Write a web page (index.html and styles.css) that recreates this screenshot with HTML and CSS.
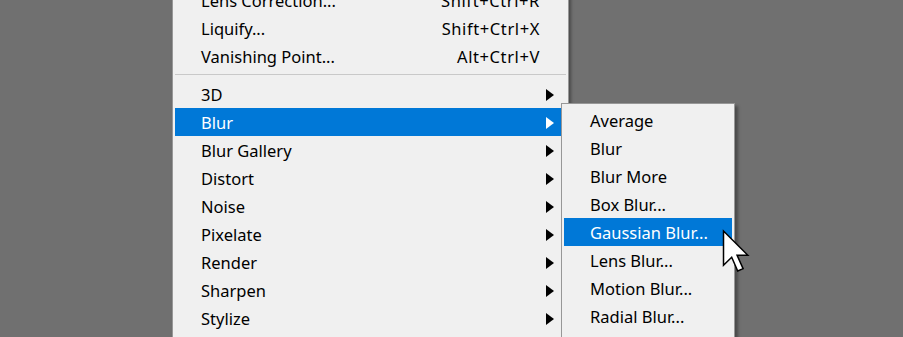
FILE: index.html
```html
<!DOCTYPE html>
<html lang="en">
<head>
  <meta charset="UTF-8">
  <title>Filter menu — Blur</title>
  <link rel="stylesheet" href="styles.css">
</head>
<body>
  <div class="menu">
    <div class="item"><span class="label">Lens Correction...</span><span class="key">Shift+Ctrl+R</span></div>
    <div class="item"><span class="label">Liquify...</span><span class="key">Shift+Ctrl+X</span></div>
    <div class="item"><span class="label">Vanishing Point...</span><span class="key">Alt+Ctrl+V</span></div>
    <div class="sep"></div>
    <div class="item sub"><span class="label">3D</span><span class="arrow"></span></div>
    <div class="item sub active"><span class="label">Blur</span><span class="arrow"></span></div>
    <div class="item sub"><span class="label">Blur Gallery</span><span class="arrow"></span></div>
    <div class="item sub"><span class="label">Distort</span><span class="arrow"></span></div>
    <div class="item sub"><span class="label">Noise</span><span class="arrow"></span></div>
    <div class="item sub"><span class="label">Pixelate</span><span class="arrow"></span></div>
    <div class="item sub"><span class="label">Render</span><span class="arrow"></span></div>
    <div class="item sub"><span class="label">Sharpen</span><span class="arrow"></span></div>
    <div class="item sub"><span class="label">Stylize</span><span class="arrow"></span></div>
    <div class="item sub"><span class="label"></span><span class="arrow"></span></div>
  </div>

  <div class="submenu">
    <div class="item"><span class="label">Average</span></div>
    <div class="item"><span class="label">Blur</span></div>
    <div class="item"><span class="label">Blur More</span></div>
    <div class="item"><span class="label">Box Blur...</span></div>
    <div class="item active"><span class="label">Gaussian Blur...</span></div>
    <div class="item"><span class="label">Lens Blur...</span></div>
    <div class="item"><span class="label">Motion Blur...</span></div>
    <div class="item"><span class="label">Radial Blur...</span></div>
    <div class="item"><span class="label"></span></div>
  </div>

  <svg class="cursor" width="28" height="44" viewBox="0 0 13 20">
    <path d="M0.7 0.7 V16.6 L4.5 12.9 L7.3 19.3 L9.8 18.2 L7 12 H12 Z" fill="#fff" stroke="#000" stroke-width="0.7" stroke-linejoin="miter"/>
  </svg>
</body>
</html>
```

FILE: styles.css
```css
body {
  margin: 0;
  background: #707070;
  font-family: 'Noto Sans', 'Open Sans', sans-serif;
  font-size: 16.5px;
  color: #000;
  height: 337px;
  overflow: hidden;
  position: relative;
}
.menu {
  width: 391px;
  margin: -17px 0 0 172px;
  padding: 2px;
  background: #f0f0f0;
  border: 1px solid #979797;
  box-shadow: 2px 2px 3px rgba(0,0,0,0.35);
}
.item {
  display: flex;
  align-items: center;
  height: 28px;
  padding: 1px 26px 0;
  box-sizing: border-box;
}
.item .label {
  flex: 1;
  white-space: nowrap;
}
.item .key {
  white-space: nowrap;
  letter-spacing: 0.6px;
}
.item.active {
  background: #0078d7;
  color: #fff;
}
.arrow {
  width: 0;
  height: 0;
  border-top: 6.5px solid transparent;
  border-bottom: 6.5px solid transparent;
  border-left: 8px solid #000;
  margin-right: -14px;
}
.active .arrow {
  border-left-color: #fff;
}
.sep {
  height: 1px;
  background: #c9c9c9;
  margin: 4px 0 5px;
}
.submenu {
  position: absolute;
  left: 561px;
  top: 103px;
  width: 168px;
  padding: 2px;
  background: #f0f0f0;
  border: 1px solid #979797;
  box-shadow: 3px 3px 3px rgba(0,0,0,0.35);
}
.cursor {
  position: absolute;
  left: 722px;
  top: 229px;
}
```
